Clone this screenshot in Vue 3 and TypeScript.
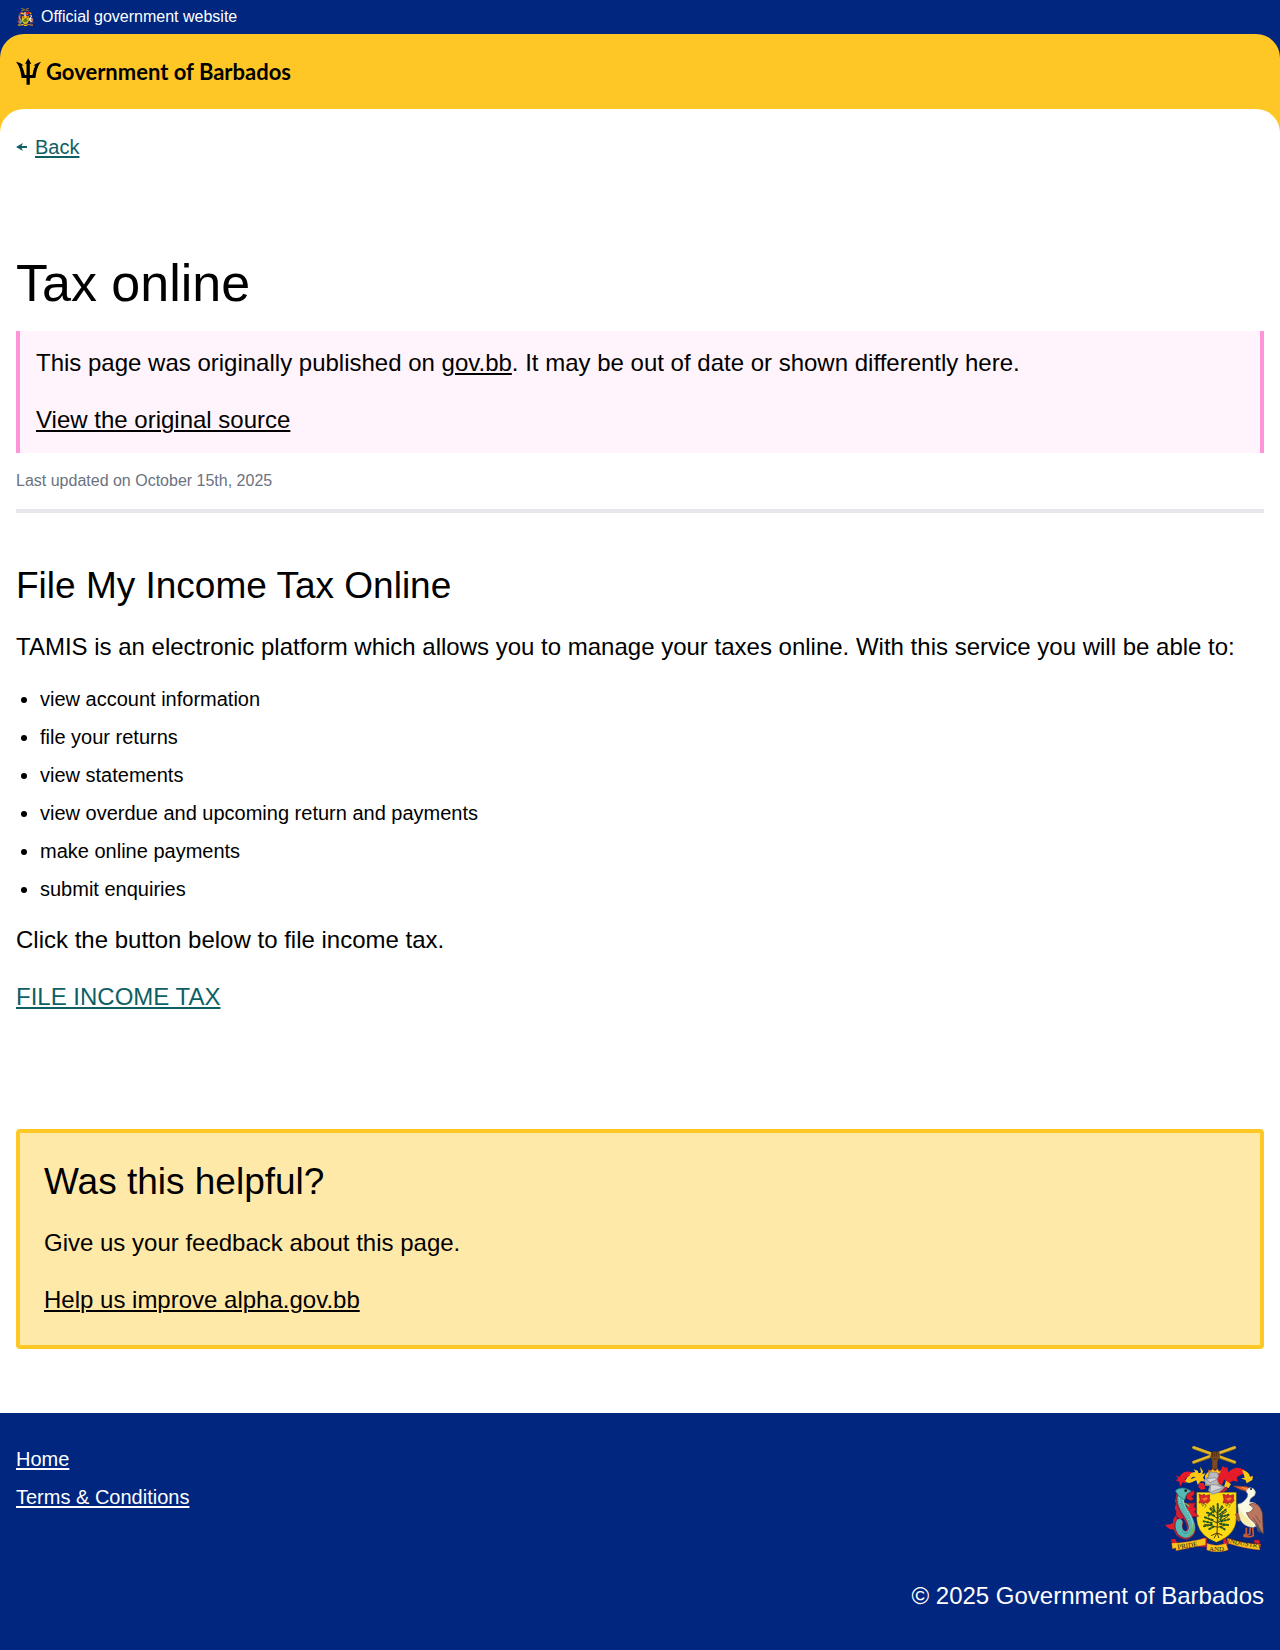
<script setup lang="ts">
const abilities: string[] = [
  'view account information',
  'file your returns',
  'view statements',
  'view overdue and upcoming return and payments',
  'make online payments',
  'submit enquiries',
]
const footerLinks: string[] = ['Home', 'Terms & Conditions']
</script>

<template>
  <div class="page">
    <svg class="defs" aria-hidden="true">
      <symbol id="crest" viewBox="42 30 300 320">
        <!-- crossed canes held in a fist -->
        <g stroke="#8d6d20" stroke-width="10" stroke-linecap="round">
          <path d="M131 38 254 82M131 82 254 38" />
        </g>
        <g stroke="#e5b92c" stroke-width="7" stroke-linecap="round">
          <path d="M131 37 254 81M131 81 254 37" />
        </g>
        <path d="M185 52q10-7 22 0l1 16-5 11v24h-17V77l-4-10z" fill="#7b4a23" stroke="#3e2414" stroke-width="2" />
        <path d="M188 53v13M194 51v14M200 51v14M188 72h12" stroke="#3e2414" stroke-width="2" />
        <!-- mantling -->
        <path d="M109 132q17-32 43-15l-6 11q-16-8-24 4l14 2q-17 18-32 4z" fill="#fcc612" />
        <path d="m77 121 11 5q13-22 38-14l-8 11-14 9 5 14-10-5-9 14-2-15-11-4 8-5z" fill="#e51b29" />
        <path d="m150 95 9 13-2 10 10-4-8 14 8 12-14-2-10 11-4-13-18 6 3-10 13-5-19-7 7-7 14 3-8-13 13 5 1 9 8-5z" fill="#fcc612" />
        <path d="m165 122 13-16h26l10 16-7 28-41 2z" fill="#fcc612" />
        <path d="m147 143 14 1 6 17-13 4-9-8z" fill="#e51b29" />
        <path d="m218 93 10 7 3-6 4 18q21-23 47-8l9 20-13-7-18 10 4 13-14-3-18 10-9-14-10 22-16-27 3-16 12-4z" fill="#e51b29" />
        <path d="m276 105q20 3 24 20l9-2-2 12-17 10-3-9-14-6 11-2q-3-12-8-23z" fill="#fcc612" />
        <path d="m228 137 15 10-7 12-14-4z" fill="#fcc612" />
        <path d="m175 104 7 5 6-8 7 7 8-7 4 8 7-4-4 11h-31z" fill="#fcc612" stroke="#b72726" stroke-width="2" />
        <!-- shield and tree -->
        <path d="M140 172h119v80q-2 48-60 70-56-21-59-70z" fill="#ffda12" stroke="#4b410a" stroke-width="1" />
        <g fill="#d9282b" stroke="#7b281b" stroke-width="2">
          <path d="m147 178 10 3 5-4 5 5 12-3-1 11 2 7-8 8-6-3-4 5-7-4-8 1 3-10zM219 178l10 3 5-4 5 5 12-3-1 11 2 7-8 8-6-3-4 5-7-4-8 1 3-10z" />
        </g>
        <path d="m152 187 8 4 8-5 6 5-12 7zM224 187l8 4 8-5 6 5-12 7z" fill="#f37b24" />
        <path d="m154 205 4 9 5-7 6 3-5 8M226 205l4 9 5-7 6 3-5 8" fill="none" stroke="#8a8215" stroke-width="3" />
        <path d="M204 210l-3 86M201 235l-19-19M201 249l-27-17M202 264l-37-17M201 276l-38-8M203 234l18-18M203 248l27-19M202 264l32-20M202 277l29-8M201 294l-18 8M201 294l-9 16M202 294l4 15M202 294l15 7" fill="none" stroke="#4b3813" stroke-width="3" />
        <g stroke="#245923" stroke-width="6" stroke-linecap="round" stroke-dasharray="4 6" fill="none">
          <path d="M203 207v57M190 214l4 16M181 221l13 15M171 233l21 9M165 247l23 8M161 259l24 5M162 274l26-6M178 282l15-8M216 214l-8 15M227 224l-17 14M236 239l-24 7M237 253l-26 7M234 270l-27-4M224 283l-13-8M184 234l-8 8M216 243l-5 11" />
        </g>
        <!-- helmet -->
        <path d="m177 111 24 1 5 9-4 11 3 15 20 9q-5 13-18 16l-21 6-11-11 5-16-10-1-8-15 15-11z" fill="#b8babf" stroke="#777a83" stroke-width="2" />
        <path d="m168 132 25-4 9 5-22 10zM182 149l19 1 19 8-24 8-16 7zM178 113l-5 20" fill="#d5d6d8" stroke="#7c7e85" stroke-width="2" />
        <path d="m207 172 22-18 3 10-12 8z" fill="#b02730" />
        <!-- dolphin -->
        <path d="M80 170q-2 9 3 18-14 5-4 19-9 11 0 22-4 14 10 24l12-3-8-69z" fill="#d71f32" />
        <path d="m112 205 24-1-5 12 9 5-7 9 13 14-28 1-10-13z" fill="#e21c2c" stroke="#811d31" stroke-width="2" />
        <path d="m79 241q-10 8-10 23-10 6-24 5 10 15 25 14 6 10 13 19l5-30q-8-14-9-31z" fill="#e21c2c" />
        <g fill="none" stroke-linecap="round">
          <path d="M91 184q-5 23 14 50 28 43 14 60-13 14-29-1-9-13-4-29" stroke="#9f2738" stroke-width="26" />
          <path d="M93 182q-5 23 14 50 28 43 14 60-13 14-29-1-9-13-4-29" stroke="#54b8b4" stroke-width="19" />
          <path d="M88 188q2 27 18 49 22 32 10 51M98 183q0 22 17 49 16 25 12 47" stroke="#bfe4dc" stroke-width="3" stroke-dasharray="2 5" />
          <path d="M92 205q2 18 19 41 15 25 6 44-8 11-21-1" stroke="#23827f" stroke-width="2" stroke-dasharray="3 5" />
          <path d="M107 206l9 7M130 270q0 22-13 32" stroke="#77b24b" stroke-width="5" />
        </g>
        <path d="M76 168q9-12 30-8l17 7 3 13-17 2-5 13-17-11z" fill="#54b8b4" stroke="#166c74" stroke-width="2" />
        <circle cx="107" cy="167" r="4" fill="#251d25" />
        <path d="m112 176 20-10 1 12-8 8 8 5-10 7-15-8z" fill="#df1d2a" stroke="#67152a" stroke-width="2" />
        <!-- pelican -->
        <path d="m251 153 39 2 12 6-6 9q-26-4-45-17z" fill="#df6431" stroke="#a54024" stroke-width="2" />
        <path d="m276 157 17 6" stroke="#ff9c45" stroke-width="3" />
        <path d="m266 233-12 5 6 9-4 6q6 4 10 8l10-9z" fill="#9e5932" />
        <path d="m301 277-2 21-18 6 18 2 11-4-2-25M289 278v18l-9 6" fill="none" stroke="#c95a35" stroke-width="5" />
        <path d="M290 165q8-11 20-4 10 8 4 20l-11 8q-5 5-4 13 16-2 28 13l-3 56-14 6q-27-2-37-20-10-25-9-49 13-1 24-15 7-8 6-16l-5-7z" fill="#fbf9e3" stroke="#c6c8bd" stroke-width="2" />
        <path d="M265 207q6 29 26 39l19 28q-26-1-36-20-7-18-9-47z" fill="#f9edaa" />
        <circle cx="303" cy="162" r="3" fill="#171717" />
        <path d="M297 208q29-12 40 26l3 62q-19-12-26-32-20-15-25-31 15 1 21-15z" fill="#bb765f" stroke="#653f3e" stroke-width="2" />
        <path d="m309 248 18 25M317 242l15 22" stroke="#805049" stroke-width="3" />
        <path d="m318 263 22 33-18-7z" fill="#514c50" />
        <!-- motto ribbon -->
        <g stroke="#ac1c28" stroke-width="1">
          <path d="m63 313 13-1 6 15-15 2zM155 309h15v26h-20zM226 309l8 20-14 8v-26zM312 316l15-1 5 16-18-2z" fill="#df1d2a" />
          <path d="M65 324q43 0 102-15v21q-44 8-89 17l-1-8-10 3zM171 325q28 11 57 0l7 20q-35 13-65 0zM232 309q48 17 100 19l-3 17q-51-5-96-20z" fill="#f8c41b" />
        </g>
      </symbol>
    </svg>

    <div class="official">
      <svg class="crest-small" aria-hidden="true"><use href="#crest" /></svg>
      <span>Official government website</span>
    </div>

    <div class="header-back">
      <header class="header">
        <a class="brand" href="#">
          <svg class="trident" viewBox="48 175 76 80" aria-hidden="true">
            <path d="M85 175 95 193 90 191V226H98Q101 207 107 196L101 198Q106 190 124 185 110 202 107 235H90V255H80V235H65Q62 202 48 185 65 188 71 198L65 196Q72 211 75 226H80V191L75 193Z" />
          </svg>
          <span>Government of Barbados</span>
        </a>
      </header>
    </div>

    <div class="main-back">
      <main class="main">
        <nav class="back">
          <svg class="arrow" viewBox="0 0 30 22" aria-hidden="true">
            <path d="M0 11 19 0 15 8H30V14H15L19 22Z" />
          </svg>
          <a href="#">Back</a>
        </nav>

        <h1>Tax online</h1>
        <section class="notice">
          <p>This page was originally published on <a href="#">gov.bb</a>. It may be out of date or shown differently here.</p>
          <p><a href="#">View the original source</a></p>
        </section>
        <p class="updated">Last updated on October 15th, 2025</p>

        <article class="article">
          <h2>File My Income Tax Online</h2>
          <p>TAMIS is an electronic platform which allows you to manage your taxes online. With this service you will be able to:</p>
          <ul>
            <li v-for="item in abilities" :key="item">{{ item }}</li>
          </ul>
          <p>Click the button below to file income tax.</p>
          <p class="action"><a href="#">FILE INCOME TAX</a></p>
        </article>

        <section class="helpful">
          <h2>Was this helpful?</h2>
          <p>Give us your feedback about this page.</p>
          <p><a href="#">Help us improve alpha.gov.bb</a></p>
        </section>
      </main>
    </div>

    <footer class="footer">
      <nav class="footer-links">
        <a v-for="link in footerLinks" :key="link" href="#">{{ link }}</a>
      </nav>
      <div class="footer-end">
        <svg class="crest-large" viewBox="42 30 300 324" role="img" aria-label="Coat of arms of Barbados">
          <use href="#crest" x="42" y="30" width="300" height="320" />
          <g class="motto">
            <text x="83" y="343" transform="rotate(-9 83 343)">PRIDE</text>
            <text x="177" y="347">AND</text>
            <text x="232" y="323" transform="rotate(10 232 323)">INDUSTRY</text>
          </g>
        </svg>
        <p>© 2025 Government of Barbados</p>
      </div>
    </footer>
  </div>
</template>

<style>
body {
  margin: 0;
}
</style>

<style scoped>
.page {
  font-family: "Liberation Sans", Arial, sans-serif;
  font-size: 24px;
  line-height: 41px;
  color: #000;
  background: #fff;
}
.defs {
  display: none;
}
h1,
h2,
p,
ul {
  margin: 0;
  font-weight: 400;
}
a {
  color: inherit;
  text-decoration-thickness: 2px;
  text-underline-offset: 2px;
}
.official {
  display: flex;
  align-items: center;
  gap: 7px;
  height: 34px;
  padding: 0 16px;
  background: #00267f;
  color: #fff;
  font-size: 16px;
  line-height: 24px;
}
.crest-small {
  width: 18px;
  height: 18px;
}
.header-back {
  background: #00267f;
}
.header {
  display: flex;
  align-items: center;
  height: 75px;
  padding: 0 16px;
  border-radius: 24px 24px 0 0;
  background: #ffc726;
}
.brand {
  display: flex;
  align-items: center;
  gap: 5px;
  font-family: Lato, sans-serif;
  font-size: 22px;
  font-weight: 700;
  line-height: 28px;
  text-decoration: none;
}
.trident {
  width: 25px;
  height: 27px;
}
.main-back {
  background: #ffc726;
}
.main {
  padding: 21px 16px 64px;
  border-radius: 24px 24px 0 0;
  background: #fff;
}
.back {
  display: flex;
  align-items: center;
  gap: 8px;
  color: #0e5f64;
  font-size: 20px;
  line-height: 34px;
}
.arrow {
  width: 11px;
  height: 8px;
  fill: currentColor;
}
h1 {
  margin: 91px 0 20px;
  font-size: 52px;
  line-height: 56px;
}
h2 {
  font-size: 37px;
  line-height: 50px;
  margin-bottom: 15px;
}
.notice {
  display: flex;
  flex-direction: column;
  gap: 16px;
  padding: 11px 16px 13px;
  border: solid #ff94db;
  border-width: 0 4px;
  background: #fff4fb;
}
.updated {
  padding: 14px 0 15px;
  border-bottom: 4px solid #e5e7eb;
  color: #6b7280;
  font-size: 16px;
  line-height: 27px;
}
.article {
  padding: 48px 0 112px;
}
ul {
  display: flex;
  flex-direction: column;
  gap: 4px;
  padding: 15px 0 13px 24px;
  font-size: 20px;
  line-height: 34px;
}
.action {
  padding-top: 16px;
  color: #0e5f64;
}
.helpful {
  padding: 24px 24px 25px;
  border: 4px solid #ffc726;
  border-radius: 4px;
  background: #ffe9a8;
}
.helpful p + p {
  margin-top: 16px;
}
.footer {
  display: flex;
  justify-content: space-between;
  padding: 29px 16px 34px;
  background: #00267f;
  color: #fff;
}
.footer-links {
  display: flex;
  flex-direction: column;
  gap: 4px;
  font-size: 20px;
  line-height: 34px;
}
.footer-end {
  display: flex;
  flex-direction: column;
  align-items: flex-end;
  gap: 22px;
  padding-top: 3px;
}
.crest-large {
  width: 100px;
  height: 108px;
}
.motto {
  font-family: "Liberation Serif", serif;
  font-size: 21px;
  fill: #2a240d;
}
</style>
